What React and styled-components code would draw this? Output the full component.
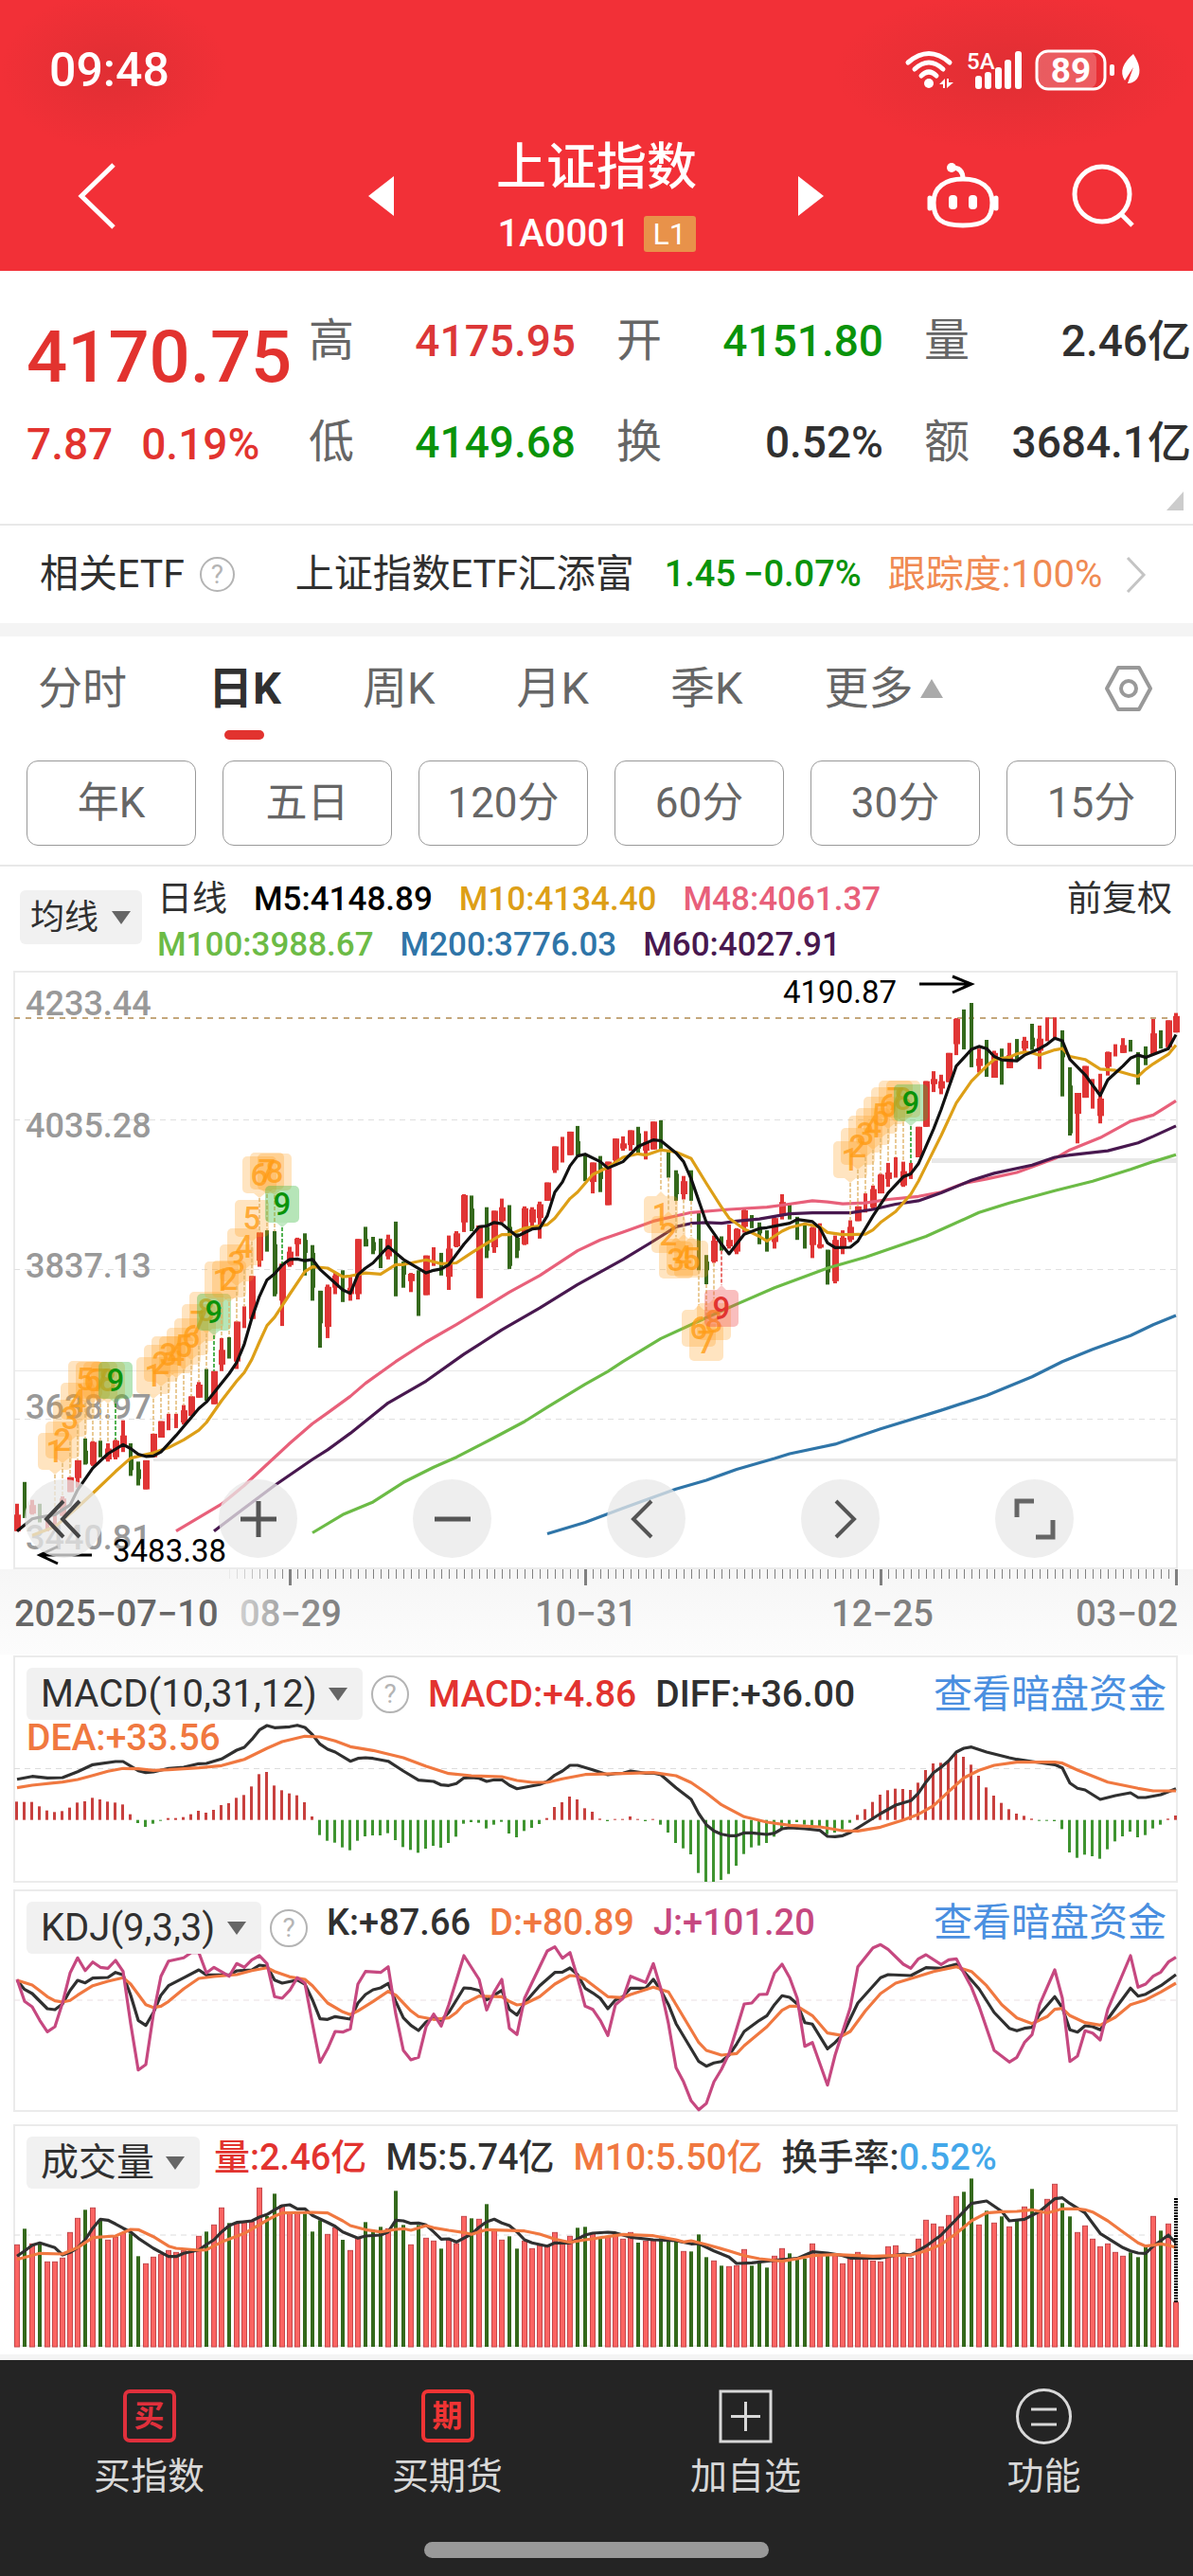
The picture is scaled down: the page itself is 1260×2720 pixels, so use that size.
import styled, { createGlobalStyle } from "styled-components";

const GlobalStyle = createGlobalStyle`
    * {
        box-sizing: border-box;
    }
    body {
        margin: 0;
        background: #fff;
        color: #303030;
        font-family: Roboto, "Noto Sans CJK SC", sans-serif;
        line-height: 1.2;
    }
    button, select {
        margin: 0;
        padding: 0;
        border: none;
        background: none;
        color: inherit;
        font: inherit;
    }
    a {
        color: inherit;
        text-decoration: none;
    }
    svg {
        display: block;
        overflow: visible;
    }
`;

const RED = "#e2332f";
const GREEN = "#0a930a";
const DARK_GREEN = "#34691c";
const ORANGE = "#f07840";
const DARK = "#303030";
const PURPLE = "#c64880";

/* ---------- chart data: every value is a height on the plot, counted from the top ---------- */

// colour, high, low, body top, body bottom
const CANDLES = `
r1237,1300,1262,1300 g1187,1270 r1228,1262,1240,1260 g1237,1280 r1265,1300 r1250,1290 r1220,1265,1225,1265 r1176,1210,1176,1210
r1137,1200,1137,1178 g1087,1147,1115,1145 r1093,1150,1095,1147 g1092,1130 r1098,1140,1110,1135 r1090,1135,1092,1130 r1045,1118,1080,1103 g1098,1173,1130,1160
g1140,1195,1158,1180 r1137,1204,1137,1204 r1076,1130,1076,1130 r1047,1085,1047,1085 r1030,1068 r1030,1063 r1010,1055,1022,1050 r990,1035,990,1035
r957,993,963,993 g927,1000 r932,1008,932,1008 r856,932,883,917 g854,903 r818,927,818,910 r783,833 r713,812,713,812
r613,692,613,678 g608,657 g610,760,640,755 r685,828,685,770 r646,692,657,688 r625,668,627,640 g615,712,630,660 g642,770,660,740
g747,878,747,822 r733,856,738,830 r705,755,712,740 g700,773 r715,770,740,755 r628,767,628,755 g600,645,628,645 g623,663,635,655
g627,695 r618,675,628,668 g588,760 g680,740,685,710 r706,750,708,725 g700,805 r666,757,666,757 r647,690
g660,712 r620,745,650,715 r610,647,615,645 r525,612,527,590 g528,610,558,605 r597,764,597,764 g555,672,600,655 r563,660,563,647
r535,590,555,587 g550,697,600,690 g615,672,625,655 r553,642,557,640 r555,600,560,590 r542,627,548,580 r498,540,498,540 r415,476,415,470
r393,452 r381,435,381,435 g368,435,403,435 g435,495 r452,523,452,497 g437,520,463,490 r450,550,450,550 r397,460,397,447
r392,425,408,420 r378,425,378,412 g370,433,385,420 r380,445,405,425 r358,422,358,422 g355,427 g427,487 g470,540,478,525
r483,537,495,525 g470,540 g565,700 g665,732,680,700 r620,683,632,680 g622,655 r595,650,630,645 r603,663,605,657
r560,613,562,600 g573,603 g590,640,600,615 g608,657 r578,650,580,635 r525,583,543,575 g545,583 g577,630
g592,650 r600,672,602,642 r592,650,640,648 g653,733,653,705 r620,730,630,725 r608,663,625,650 r585,635,600,630 r553,587,553,587
r523,567 r505,560,513,555 r478,523,480,523 r453,508,475,490 r440,487 r450,508,472,505 r453,490 r370,440,370,440
r265,370,265,370 r242,290,260,272 r250,295,265,282 r200,267,200,267 r120,205,122,180 g100,192 g85,233 r190,245,213,230
g170,255 r195,257,200,257 g190,273 r177,235,205,235 g168,215 r163,200,172,190 g133,193,165,185 r137,237,167,195
r118,173 r118,170 g148,300,180,210 g233,390,275,385 r292,408,292,340 r230,303,230,303 r260,328 r248,362,305,345
r197,252,198,232 r180,208 r166,200,182,200 g170,197 g198,273 g185,228 r122,203,155,203 g148,190
r125,187,125,187 r108,153,115,153`
  .trim()
  .split(/\s+/)
  .map((item) => {
    const [high, low, top, bottom] = item.slice(1).split(",").map(Number);
    return { up: item[0] === "r", high, low, top, bottom };
  });

// bar index : value
const AVERAGES = [
  { color: "#2f75a8", data: "70:1306 75:1280 80:1247 87:1203 91:1183 95:1158 100:1133 102:1122 108:1100 114:1065 122:1022 128:988 134:945 138:910 142:882 147:850 150:825 153:804" },
  { color: "#6cbb46", data: "39:1304 43:1262 47:1233 51:1188 55:1153 58:1130 63:1085 67:1048 70:1015 75:962 78:933 80:910 85:857 90:817 95:778 100:740 107:695 112:670 117:640 120:622 127:567 131:545 137:517 142:495 147:468 150:450 153:434" },
  { color: "#e8607a", data: "21:1300 27:1238 30:1195 36:1098 39:1053 41:1028 44:990 46:960 50:910 54:865 58:825 61:793 65:750 69:712 74:655 77:630 80:612 84:587 89:567 94:560 99:555 101:550 105:540 107:543 109:547 112:545 115:537 119:530 122:520 125:500 128:490 132:475 137:443 139:423 143:395 147:357 150:343 153:310" },
  { color: "#48184f", data: "26:1300 34:1195 39:1135 41:1113 44:1075 49:1005 54:955 59:893 64:837 69:787 74:733 80:675 84:633 87:600 89:592 91:590 93:592 95:587 98:582 102:570 105:568 110:568 113:560 116:548 119:540 122:522 126:493 129:477 134:458 137:440 139:435 144:425 148:407 150:392 153:368" },
  { color: "#dd9f17", data: "2:1310 5:1290 8:1245 10:1213 13:1163 15:1132 17:1124 18:1120 20:1108 22:1090 24:1068 25:1050 27:1000 29:955 30:935 31:905 32:865 33:827 34:808 36:755 38:703 39:692 41:695 43:715 44:713 46:706 48:709 50:687 51:687 54:676 56:685 58:683 60:660 62:638 64:618 65:618 67:603 70:595 71:580 73:535 74:520 76:480 78:463 80:440 82:432 83:435 85:423 87:428 89:443 91:500 93:555 94:580 96:605 98:622 99:633 101:610 102:602 104:593 106:600 107:613 109:618 110:618 112:617 113:607 114:590 116:565 118:525 119:495 120:460 122:390 124:315 126:265 128:230 129:215 131:210 132:202 133:198 134:200 135:205 137:193 138:190 139:208 141:215 143:237 145:240 147:250 148:254 149:238 150:225 152:203 153:182" },
  { color: "#111", data: "0:1300 2:1272 3:1268 5:1262 7:1240 8:1205 10:1155 12:1122 14:1101 15:1110 16:1123 17:1128 18:1127 19:1118 21:1080 24:1018 25:1003 28:938 29:912 30:870 31:810 32:760 33:722 34:708 35:688 36:675 37:674 38:678 39:675 40:698 43:745 44:753 45:710 46:695 47:683 49:645 51:675 54:706 55:700 56:697 57:687 59:640 61:600 62:598 63:590 64:593 66:622 68:605 69:603 70:575 71:520 72:497 73:460 74:437 75:433 77:450 78:465 80:450 82:415 84:400 85:402 87:430 88:450 89:490 90:540 91:590 93:640 94:662 96:617 98:604 99:602 101:595 102:592 103:583 105:588 106:603 107:637 108:648 110:647 111:633 113:575 115:522 117:485 118:478 119:455 121:375 122:330 123:280 124:230 126:192 127:185 128:190 129:208 130:216 132:218 133:205 135:190 136:180 137:166 138:172 139:215 141:250 143:298 144:262 146:230 147:212 148:205 149:210 152:190 153:158" },
];

// nine-turn counters: first bar index, flag tops, side of the candle
const COUNTERS = [
  { start: 5, last: "green", tops: [488, 476, 453, 435, 412, 413, 413, 413, 413] },
  { start: 18, last: "green", tops: [408, 395, 386, 386, 377, 367, 352, 339, 341] },
  { start: 27, last: "green", tops: [307, 306, 289, 272, 242, 196, 192, 193, 227] },
  { start: 85, last: "red", below: true, tops: [238, 259, 286, 283, 285, 358, 373, 351, 337] },
  { start: 110, last: "green", tops: [180, 166, 153, 145, 133, 123, 116, 116, 120] },
];
const FLAG_COLORS = {
  orange: { fill: "#ff9e1b", text: "#ff9c14" },
  green: { fill: "#35b63b", text: "#0a930a" },
  red: { fill: "#ee4a4a", text: "#e2332f" },
};

const MACD_BARS = `487 488 488 502 515 520 517 506 490 486 475 480 487 490 496 527 555 567 557 548 539 539 536 527 516 522 513 498 492 475 466 439 400 393 436 451 461 467 489 534
593 611 617 632 641 611 597 594 594 587 609 631 640 649 636 627 633 618 598 557 552 554 572 560 551 588 600 580 570 558 539 504 489 471 480 508 519 541 549 542
542 534 542 549 542 560 585 618 635 654 713 741 741 735 716 690 653 632 626 618 598 575 570 552 560 565 570 590 585 575 554 529 511 488 465 451 446 447 450 427
387 366 364 360 335 345 370 405 442 468 491 511 525 532 541 548 548 549 574 648 665 655 660 668 638 613 597 582 600 593 572 560 541 531`
  .split(/\s+/)
  .map(Number);
const MACD_LINES = [
  { color: DARK, data: "0:416 2:407 4:412 6:411 8:392 10:370 13:360 14:360 16:389 17:395 18:393 20:382 22:378 24:367 25:366 27:352 29:324 30:315 31:290 32:260 33:246 34:253 36:250 37:245 38:252 39:275 40:305 41:321 42:330 44:359 45:350 46:348 47:350 49:359 51:390 53:419 55:423 56:434 57:436 58:430 59:412 60:411 61:413 62:423 63:418 64:418 65:435 66:446 69:433 70:423 71:403 72:390 73:372 74:372 76:386 78:402 79:398 80:397 81:390 83:397 84:397 85:402 87:443 89:480 90:525 91:560 92:580 93:590 94:595 95:595 96:586 97:586 99:591 100:587 101:573 102:570 104:573 106:578 107:597 108:598 109:595 110:585 112:555 114:525 116:498 118:484 119:460 120:425 121:395 122:378 123:358 124:330 125:318 126:314 128:330 131:348 132:353 134:360 137:370 138:380 139:428 140:445 141:450 143:480 145:468 147:459 148:474 149:474 151:465 153:446" },
  { color: ORANGE, data: "0:443 2:435 6:425 8:417 10:404 12:391 14:382 16:383 18:388 20:386 22:383 24:380 27:373 30:353 33:318 35:297 38:280 40:282 42:295 44:313 47:325 51:348 54:375 57:398 60:405 64:408 66:420 68:426 70:426 72:415 75:401 80:398 84:395 87:405 89:427 91:460 93:497 96:535 99:552 102:562 106:567 109:579 111:580 114:568 117:545 119:527 121:500 123:455 125:412 127:388 129:372 132:362 137:362 138:365 140:387 144:425 148:445 150:453 153:453" },
];

const KDJ_LINES = [
  { color: DARK, data: "0:1053 1:1082 2:1095 4:1143 5:1146 6:1128 7:1085 8:1053 9:1061 10:1046 12:1044 13:1028 14:1036 15:1100 16:1180 17:1196 18:1155 19:1100 20:1070 22:1045 24:1020 25:1036 28:1036 29:1023 31:1020 32:1005 33:1008 34:1052 35:1062 37:1052 38:1065 39:1115 40:1175 41:1177 42:1168 44:1176 45:1125 46:1098 47:1083 48:1077 49:1063 50:1120 51:1172 52:1196 53:1212 54:1185 55:1170 56:1180 57:1155 59:1077 60:1079 61:1085 62:1115 64:1085 65:1145 66:1163 67:1125 69:1070 71:1028 72:1027 73:1014 74:1035 75:1078 76:1093 77:1110 78:1143 79:1115 80:1105 81:1078 83:1078 84:1050 85:1085 86:1130 87:1190 90:1310 91:1325 92:1315 93:1310 94:1290 95:1255 96:1215 98:1180 99:1165 100:1130 101:1102 102:1107 103:1128 104:1187 105:1192 107:1270 108:1250 109:1225 111:1125 114:1045 115:1035 118:1038 120:1013 122:1015 124:1002 125:1025 127:1080 129:1155 131:1205 132:1213 133:1205 134:1202 135:1160 137:1105 138:1140 139:1210 140:1217 141:1197 142:1200 143:1210 144:1175 147:1078 148:1103 149:1097 151:1070 153:1035" },
  { color: ORANGE, data: "0:1053 2:1068 3:1086 4:1105 5:1118 6:1122 7:1117 8:1100 10:1070 12:1056 14:1045 15:1065 17:1130 18:1139 19:1135 20:1120 22:1080 24:1047 26:1041 29:1035 31:1022 33:1013 34:1025 36:1042 38:1050 39:1070 41:1125 43:1153 44:1162 45:1150 47:1120 49:1088 50:1100 52:1150 53:1168 55:1177 57:1172 58:1155 59:1128 61:1103 64:1105 65:1120 66:1131 67:1128 69:1105 71:1065 73:1038 74:1040 75:1050 78:1105 80:1108 81:1098 84:1075 86:1090 88:1170 90:1250 91:1275 93:1290 95:1285 96:1260 99:1200 101:1148 102:1135 103:1135 105:1165 107:1220 109:1228 110:1215 112:1150 114:1095 116:1062 119:1040 121:1025 124:1010 126:1025 128:1070 130:1130 132:1172 134:1190 136:1168 137:1145 138:1142 139:1165 141:1187 143:1195 145:1170 147:1130 149:1115 151:1090 153:1062" },
  { color: PURPLE, data: "0:1050 1:1120 2:1137 3:1180 4:1216 5:1200 6:1125 7:1030 8:982 9:1022 10:995 11:1012 12:1015 13:990 14:1025 15:1190 16:1337 17:1320 18:1160 19:1040 20:992 22:982 23:965 24:965 25:1030 26:1012 28:1040 29:1000 30:1012 31:988 32:975 33:1000 34:1105 35:1110 36:1085 37:1045 38:1062 39:1190 40:1313 41:1270 42:1215 43:1217 44:1207 45:1065 46:1025 48:1028 49:1010 50:1160 51:1275 52:1305 53:1297 54:1200 55:1160 56:1198 57:1130 59:975 61:1050 62:1147 63:1090 64:1050 65:1205 66:1225 67:1110 68:1060 70:960 71:947 72:983 73:965 74:1045 75:1135 76:1145 77:1180 78:1228 79:1130 80:1110 81:1040 83:1060 84:1000 85:1080 86:1190 87:1330 88:1375 89:1435 90:1463 91:1443 92:1375 93:1335 94:1285 96:1128 97:1125 98:1098 99:1097 100:1030 101:1002 102:1045 103:1110 104:1262 105:1250 107:1385 108:1290 110:1140 111:1010 112:980 113:950 114:940 115:955 117:1002 118:1015 119:985 120:972 122:1003 123:988 124:985 126:1075 127:1135 129:1275 131:1312 132:1297 133:1250 134:1225 135:1130 137:1020 138:1110 139:1310 140:1293 141:1213 142:1220 143:1242 144:1145 147:975 148:1075 149:1065 150:1040 151:1027 152:995 153:980" },
];

const VOLUMES = `421 370 418 420 475 475 463 382 337 310 304 345 406 397 385 385 457 481 460 452 439 445 440 440 394 379 358 304 352 355 350 348 241 330 259 296 322 322 322 379
343 388 367 405 439 400 349 373 364 370 250 358 421 358 400 409 433 405 417 331 337 340 292 376 406 394 433 409 433 424 424 382 412 394 367 364 385 400 395 388
403 382 414 409 408 400 405 408 442 442 388 460 472 487 490 487 436 487 475 493 457 433 448 465 465 418 455 452 455 481 460 445 455 472 475 427 424 455 463 403
343 355 364 328 268 253 211 358 313 352 331 364 345 301 244 316 277 229 289 331 382 361 403 427 418 445 457 445 460 421 331 376 355 603`
  .split(/\s+/)
  .map(Number);
const VOLUME_LINES = [
  { color: DARK, data: "0:457 1:440 2:422 3:415 5:430 6:453 7:445 8:430 9:405 10:368 11:340 12:343 13:355 14:368 15:380 16:400 18:432 20:458 21:458 22:448 24:437 25:420 26:405 27:380 28:360 29:350 31:345 32:333 33:325 34:310 35:297 36:294 37:307 38:307 39:328 41:350 42:362 43:380 45:400 46:393 48:390 49:380 50:343 51:345 52:353 53:352 54:358 55:380 56:403 57:402 58:412 60:387 61:365 62:348 63:340 64:352 65:360 66:380 67:405 68:415 70:425 71:415 73:415 75:390 76:384 78:381 79:383 81:397 84:405 87:408 89:418 90:417 92:440 94:460 95:480 97:478 100:470 103:464 105:443 107:447 109:455 110:463 114:463 117:450 118:453 120:425 122:390 124:340 126:290 128:282 130:315 131:345 133:340 135:315 137:275 138:272 139:290 141:320 143:385 145:415 146:430 147:440 148:447 149:448 150:425 152:390 153:415" },
  { color: ORANGE, data: "0:467 3:448 6:450 8:430 10:398 13:393 15:372 16:373 18:395 20:425 21:432 24:438 25:437 27:412 30:385 32:357 33:343 34:330 35:320 39:318 41:320 43:345 44:360 46:373 48:380 50:372 51:370 52:375 54:360 55:367 57:375 59:382 60:388 62:373 67:377 69:387 71:403 73:413 75:405 78:395 80:388 84:392 87:405 88:412 89:408 91:420 94:440 96:455 98:465 101:473 103:465 105:455 108:452 111:455 113:457 116:455 118:453 120:440 122:420 124:385 126:345 128:320 130:316 132:315 134:310 136:320 138:307 140:307 141:310 142:317 144:345 146:380 148:415 149:425 150:422 151:418 152:422 153:430" },
];

const X_LABELS = [
  { x: 1, text: "2025−07−10", fill: "#666", anchor: "start" },
  { x: 293, text: "08−29", fill: "url(#fade)", anchor: "middle" },
  { x: 605, text: "10−31", fill: "#808080", anchor: "middle" },
  { x: 918, text: "12−25", fill: "#808080", anchor: "middle" },
  { x: 1230, text: "03−02", fill: "#808080", anchor: "end" },
];
const Y_LABELS = [
  { y: 47, text: "4233.44" },
  { y: 176, text: "4035.28" },
  { y: 324, text: "3837.13" },
  { y: 473, text: "3638.97" },
  { y: 611, text: "3440.81" },
];

const barX = (i) => 4 + 8 * i;
const priceY = (v) => Math.round(v * 4.59) / 10 - 5;

const Line = ({ data, color, y }) => (
  <polyline
    points={data
      .split(" ")
      .map((p) => {
        const [i, v] = p.split(":").map(Number);
        return `${barX(i)},${y(v).toFixed(1)}`;
      })
      .join(" ")}
    fill="none"
    stroke={color}
    strokeWidth="3.2"
    strokeLinejoin="round"
  />
);

/* ---------- header ---------- */

const Header = styled.header`
    color: #fff;
    background:
        radial-gradient(closest-side, rgba(205, 45, 48, 0.5), transparent) 0 -10px / 240px 170px no-repeat,
        radial-gradient(closest-side, rgba(205, 45, 48, 0.5), transparent) right -10px / 380px 170px no-repeat,
        #f23037;
`;
const StatusBar = styled.div`
    display: flex;
    align-items: center;
    justify-content: space-between;
    height: 148px;
    padding: 0 55px 0 52px;
`;
const Clock = styled.time`
    font-size: 50px;
    font-weight: 500;
`;
const StatusIcons = styled.div`
    display: flex;
    align-items: center;
    gap: 14px;
`;
const NavBar = styled.nav`
    display: grid;
    grid-template-columns: 1fr auto 1fr;
    grid-template-rows: 100%;
    align-items: center;
    height: 138px;
    padding-bottom: 20px;
`;
const NavSide = styled.div`
    display: flex;
    align-items: center;
    justify-content: space-between;
    padding: 0 ${(props) => (props.$end ? "62px" : "108px")} 0 ${(props) => (props.$end ? "107px" : "81px")};
`;
const NavTools = styled.div`
    display: flex;
    align-items: center;
    gap: 76px;
`;
const IconButton = styled.button`
    display: block;
    cursor: pointer;
`;
const TitleBlock = styled.div`
    text-align: center;
`;
const Title = styled.h1`
    margin: 0;
    font-size: 53px;
    font-weight: 500;
    line-height: 80px;
`;
const Code = styled.div`
    display: flex;
    align-items: center;
    justify-content: center;
    gap: 14px;
    font-size: 40px;
    font-weight: 500;
    line-height: 60px;
`;
const LevelBadge = styled.span`
    width: 55px;
    border-radius: 3px;
    background: #e8924a;
    font-size: 32px;
    font-weight: 400;
    line-height: 38px;
`;

/* ---------- quote ---------- */

const Quote = styled.section`
    display: flex;
    position: relative;
    height: 269px;
    padding: 20px 2px 0 28px;
    border-bottom: 2px solid #e8e8e8;
`;
const PriceBlock = styled.div`
    flex: none;
    width: 298px;
    color: #e2332f;
`;
const Price = styled.div`
    font-size: 76px;
    font-weight: 500;
    line-height: 142px;
    white-space: nowrap;
`;
const Change = styled.div`
    display: flex;
    gap: 30px;
    font-size: 46px;
    font-weight: 500;
    line-height: 42px;
`;
const Stats = styled.dl`
    flex: 1;
    display: grid;
    grid-template-columns: repeat(3, 1fr);
    grid-auto-rows: 107px;
    align-items: center;
    column-gap: 43px;
    margin: 0;
`;
const Stat = styled.div`
    display: flex;
    align-items: baseline;
    justify-content: space-between;
    font-size: 46px;
    white-space: nowrap;
`;
const StatName = styled.dt`
    color: #666;
    font-size: 48px;
`;
const StatValue = styled.dd`
    margin: 0;
    color: ${(props) => props.$color || DARK};
    font-weight: 500;
`;
const Corner = styled.span`
    position: absolute;
    right: 10px;
    bottom: 14px;
    border-left: 18px solid transparent;
    border-bottom: 20px solid #ccc;
`;

const EtfRow = styled.a`
    display: flex;
    align-items: center;
    height: 117px;
    padding: 0 49px 0 42px;
    border-bottom: 14px solid #f4f4f4;
    font-size: 41px;
    white-space: nowrap;
`;
const EtfName = styled.span`
    margin: 0 32px 0 64px;
`;
const EtfNumber = styled.span`
    margin-right: ${(props) => props.$gap || 0}px;
    color: ${(props) => props.$color};
    font-size: ${(props) => props.$size}px;
    font-weight: ${(props) => (props.$bold ? 500 : 400)};
`;
const Help = styled.span`
    flex: none;
    width: ${(props) => props.$size}px;
    height: ${(props) => props.$size}px;
    margin-left: ${(props) => props.$gap}px;
    border: 2px solid #b4b4b4;
    border-radius: 50%;
    color: #b4b4b4;
    font-size: 28px;
    line-height: ${(props) => props.$size - 4}px;
    text-align: center;
`;
const PushRight = styled.span`
    margin-left: auto;
`;

/* ---------- periods ---------- */

const Tabs = styled.div`
    display: flex;
    align-items: center;
    gap: 86px;
    height: 110px;
    padding: 0 42px 0 40px;
`;
const Tab = styled.button`
    display: flex;
    align-items: center;
    gap: 8px;
    position: relative;
    color: ${(props) => (props.$active ? "#303030" : "#666")};
    font-size: 47px;
    font-weight: ${(props) => (props.$active ? 700 : 400)};
    white-space: nowrap;

    &::after {
        content: "";
        display: ${(props) => (props.$active ? "block" : "none")};
        position: absolute;
        left: 50%;
        bottom: -26px;
        width: 42px;
        height: 10px;
        margin-left: -21px;
        border-radius: 5px;
        background: #e2332f;
    }
`;
const Triangle = styled.span`
    border: ${(props) => props.$size}px solid transparent;
    border-top: ${(props) => (props.$up ? "0" : "14px solid #666")};
    border-bottom: ${(props) => (props.$up ? "20px solid #aaa" : "0")};
`;
const SubPeriods = styled.div`
    display: grid;
    grid-template-columns: repeat(6, 1fr);
    gap: 28px;
    padding: 21px 18px 20px 28px;
    border-bottom: 2px solid #e8e8e8;
`;
const PeriodButton = styled.button`
    height: 90px;
    border: 1px solid #999;
    border-radius: 12px;
    color: #666;
    font-size: 44px;
`;

/* ---------- charts ---------- */

const Legend = styled.div`
    display: flex;
    align-items: flex-start;
    height: 110px;
    padding: 11px 22px 0 21px;
    font-size: 35px;
    line-height: 48px;
    white-space: nowrap;
`;
const LegendRows = styled.div`
    flex: 1;
    margin-left: 16px;
    font-weight: 500;
`;
const LegendRow = styled.div`
    display: flex;
    gap: 28px;
`;
const LegendTitle = styled.span`
    font-size: 37px;
    font-weight: 400;
`;
const Colored = styled.span`
    color: ${(props) => props.$color || DARK};
`;
const SelectBox = styled.span`
    flex: none;
    display: inline-flex;
    align-items: center;
    position: relative;
    height: ${(props) => (props.$small ? 57 : 55)}px;
    margin-top: ${(props) => (props.$small ? 14 : 0)}px;
    border-radius: 6px;
    background: #f1f1f1;
    color: #303030;

    select {
        height: 100%;
        padding: 0 ${(props) => (props.$small ? "45px 0 11px" : "48px 0 15px")};
        appearance: none;
        font-size: ${(props) => (props.$small ? 36 : 40)}px;
    }
    ${Triangle} {
        position: absolute;
        right: ${(props) => (props.$small ? 12 : 16)}px;
        pointer-events: none;
    }
`;
const Charts = styled.main`
    padding: 0 16px 8px 14px;
    border-bottom: 6px solid #f4f4f4;
`;
const PlotArea = styled.div`
    position: relative;
    margin-bottom: ${(props) => props.$gap || 0}px;
`;
const Plot = styled.svg`
    width: 100%;
    height: auto;
`;
const ZoomBar = styled.div`
    display: flex;
    justify-content: space-between;
    position: absolute;
    top: 537px;
    left: 12px;
    right: 110px;
`;
const RoundButton = styled.button`
    display: flex;
    align-items: center;
    justify-content: center;
    width: 83px;
    height: 83px;
    border-radius: 50%;
    background: rgba(232, 232, 232, 0.75);
`;
const PanelHead = styled.div`
    display: flex;
    align-items: ${(props) => (props.$center ? "center" : "flex-start")};
    position: absolute;
    top: 13px;
    left: 14px;
    right: 12px;
    line-height: 44px;
    white-space: nowrap;
`;
const Indicator = styled.div`
    display: flex;
    align-items: center;
`;
const Values = styled.div`
    display: flex;
    gap: 20px;
    margin-left: ${(props) => props.$gap}px;
    font-size: ${(props) => props.$size}px;
    font-weight: 500;
`;
const DarkPoolLink = styled.a`
    margin-left: auto;
    color: #4a8fe0;
    font-size: 41px;
`;
const SecondRow = styled.div`
    position: absolute;
    top: 65px;
    left: 14px;
    color: #f07840;
    font-size: 39px;
    font-weight: 500;
    line-height: 44px;
`;

/* ---------- bottom bar ---------- */

const BottomBar = styled.footer`
    padding-bottom: 19px;
    background: #242424;
    color: #d8d8d8;
`;
const Actions = styled.div`
    display: grid;
    grid-template-columns: repeat(4, 1fr);
    height: 192px;
    padding-top: 30px;
`;
const Action = styled.button`
    display: flex;
    flex-direction: column;
    align-items: center;
    gap: 6px;
    font-size: 39px;
    line-height: 56px;
`;
const WordIcon = styled.span`
    width: 56px;
    height: 56px;
    margin: 1px 0 2px;
    border: 4px solid ${(props) => props.$color};
    border-radius: 7px;
    color: ${(props) => props.$color};
    font-size: 32px;
    font-weight: 700;
    line-height: 48px;
`;
const HomeIndicator = styled.div`
    width: 364px;
    height: 17px;
    margin: 0 auto;
    border-radius: 9px;
    background: #999;
`;

const STATS = [
  { name: "高", value: "4175.95", color: "#dc3737" },
  { name: "开", value: "4151.80", color: GREEN },
  { name: "量", value: "2.46亿" },
  { name: "低", value: "4149.68", color: GREEN },
  { name: "换", value: "0.52%" },
  { name: "额", value: "3684.1亿" },
];

const Dropdown = ({ text, label, small }) => (
  <SelectBox $small={small}>
    <select aria-label={label}>
      <option>{text}</option>
    </select>
    <Triangle $size={10} />
  </SelectBox>
);

const StatusBarIcons = () => (
  <StatusIcons>
    <svg width="51" height="42" viewBox="0 0 51 42" fill="none" stroke="#fff" strokeWidth="5" strokeLinecap="round">
      <path d="M3 13Q25-6 47 13M10 20Q25 6 40 20M17 27Q25 19 33 27" />
      <circle cx="25" cy="35" r="5" fill="#fff" stroke="none" />
      <path d="M42 30v10h-2v-4h-4zM44 40V30h2v4h5z" fill="#fff" stroke="none" />
    </svg>
    <svg width="58" height="42" viewBox="0 0 58 42" fill="#fff">
      <text x="0" y="20" fontSize="24" fontWeight="500">5A</text>
      <rect x="9" y="27" width="7" height="14" rx="3" />
      <rect x="19" y="23" width="7" height="18" rx="3" />
      <rect x="30" y="18" width="7" height="23" rx="3" />
      <rect x="40" y="10" width="7" height="31" rx="3" />
      <rect x="51" y="1" width="7" height="40" rx="3" />
    </svg>
    <svg width="112" height="44" viewBox="0 0 112 44">
      <rect x="3" y="3" width="62" height="38" rx="8" fill="#fff" fillOpacity="0.22" />
      <rect x="2" y="2" width="72" height="40" rx="12" fill="none" stroke="#fff" strokeWidth="3" />
      <rect x="79" y="16" width="5" height="12" rx="2" fill="#fff" />
      <text x="38" y="35" fontSize="37" fontWeight="700" fill="#fff" textAnchor="middle">89</text>
      <path d="M104 5C110 14 113 24 108 31C105 35 101 36 98 36L104 19L95 33C89 24 93 14 104 5Z" fill="#fff" />
    </svg>
  </StatusIcons>
);

const PriceChart = () => (
  <Plot viewBox="0 0 1230 723">
    <defs>
      <linearGradient id="fade">
        <stop offset="0" stopColor="#d0d0d0" />
        <stop offset="0.6" stopColor="#909090" />
        <stop offset="1" stopColor="#808080" />
      </linearGradient>
      <linearGradient id="axis" x1="0" y1="0" x2="0" y2="1">
        <stop offset="0" stopColor="#f6f6f6" />
        <stop offset="1" stopColor="#fcfcfc" />
      </linearGradient>
    </defs>
    <rect x="-14" y="632" width="1260" height="90" fill="url(#axis)" />
    <rect x="1" y="1" width="1228" height="630" fill="#fff" stroke="#ebebeb" strokeWidth="2" />
    <g stroke="#e0e0e0" strokeDasharray="6 5">
      <path d="M1 157.5H1229M1 315.5H1229M1 473.5H1229" />
    </g>
    <path d="M1 422.5H1229" stroke="#e8e8e8" />
    <path d="M148 516.5H1229" stroke="#e8e8e8" strokeWidth="3" />
    <path d="M970 200.5H1229" stroke="#e8e8e8" strokeWidth="5" />
    <path d="M1 50H1229" stroke="#c4a77c" strokeWidth="2" strokeDasharray="6 6" />

    <g fill="#999" fontSize="36" fontWeight="500">
      {Y_LABELS.map((label) => (
        <text key={label.text} x="13" y={label.y}>{label.text}</text>
      ))}
    </g>

    {CANDLES.map((c, i) => (
      <g key={i} fill={c.up ? "#e03535" : DARK_GREEN}>
        <rect x={barX(i) - 2} y={priceY(c.high)} width="4" height={priceY(c.low) - priceY(c.high)} />
        {c.top && (
          <rect x={barX(i) - (c.up ? 3 : 2)} y={priceY(c.top)} width={c.up ? 7 : 5} height={priceY(c.bottom) - priceY(c.top)} />
        )}
      </g>
    ))}
    {AVERAGES.map((line) => (
      <Line key={line.color} {...line} y={priceY} />
    ))}

    {COUNTERS.map((group) =>
      group.tops.map((top, n) => {
        const x = barX(group.start + n);
        const candle = CANDLES[group.start + n];
        const isLast = n === 8;
        const colors = FLAG_COLORS[isLast ? group.last : "orange"];
        const tip = group.below ? `M${x - 5} ${top}l5 -5l5 5` : `M${x - 6} ${top + 39}l6 5l6 -5`;
        const from = group.below ? priceY(candle.low) : top + 44;
        const to = group.below ? top - 5 : priceY(candle.high);
        return (
          <g key={`${group.start}-${n}`}>
            <path d={`M${x} ${from}V${to}`} stroke={isLast ? colors.text : "#e0b46a"} strokeWidth="1.4" strokeDasharray="4 2" />
            <rect x={x - 18} y={top} width="36" height="39" rx="5" fill={colors.fill} fillOpacity={isLast ? 0.36 : 0.28} />
            <path d={tip} fill={colors.fill} fillOpacity="0.3" />
            <text x={x} y={top + 31} fontSize="33" fontWeight="500" textAnchor="middle" fill={colors.text} fillOpacity={isLast ? 1 : 0.8}>
              {n + 1}
            </text>
          </g>
        );
      })
    )}

    <g fill="none" stroke="#000" strokeWidth="3">
      <path d="M957 14h54M992 6l20 8l-20 9" />
      <path d="M83 617H30M47 608l-19 9l19 9" />
    </g>
    <g fontSize="33" fill="#000">
      <text x="813" y="34">4190.87</text>
      <text x="105" y="624">3483.38</text>
    </g>

    {CANDLES.map((c, i) => {
      const major = [36, 75, 114, 153].includes(i);
      if (i < 28) return null;
      return (
        <rect
          key={i}
          x={barX(i) - (major ? 1 : 0)}
          y="632"
          width={major ? 3 : 1}
          height={major ? 17 : 10}
          fill="#808080"
          fillOpacity={i < 36 ? (i - 27) / 9 : 1}
        />
      );
    })}
    <g fontSize="38" fontWeight="500">
      {X_LABELS.map((label) => (
        <text key={label.text} x={label.x} y="692" fill={label.fill} textAnchor={label.anchor}>{label.text}</text>
      ))}
    </g>
  </Plot>
);

const macdY = (v) => v / 3 - 8;
const kdjY = (v) => v / 3 - 255;
const volumeY = (v) => v / 3 - 13;

const MacdChart = () => (
  <Plot viewBox="0 0 1230 240">
    <rect x="1" y="1" width="1228" height="238" fill="#fff" stroke="#ebebeb" strokeWidth="2" />
    <path d="M1 119.5H1229" stroke="#dcdcdc" strokeDasharray="6 5" />
    {MACD_BARS.map((v, i) => (
      <rect
        key={i}
        x={barX(i) - 2}
        y={macdY(Math.min(v, 545))}
        width="3"
        height={Math.abs(v - 545) / 3}
        fill={v < 545 ? "#c8403e" : "#3e9430"}
      />
    ))}
    {MACD_LINES.map((line) => (
      <Line key={line.color} {...line} y={macdY} />
    ))}
  </Plot>
);

const KdjChart = () => (
  <Plot viewBox="0 0 1230 235">
    <rect x="1" y="1" width="1228" height="233" fill="#fff" stroke="#ebebeb" strokeWidth="2" />
    <path d="M1 117H1229" stroke="#eadfe3" strokeDasharray="6 5" />
    {KDJ_LINES.map((line) => (
      <Line key={line.color} {...line} y={kdjY} />
    ))}
  </Plot>
);

const VolumeChart = () => (
  <Plot viewBox="0 0 1230 235">
    <rect x="1" y="1" width="1228" height="233" fill="#fff" stroke="#ebebeb" strokeWidth="2" />
    <path d="M1 117H1229" stroke="#dcdcdc" strokeDasharray="6 5" />
    {VOLUMES.map((v, i) =>
      CANDLES[i].up ? (
        <rect key={i} x={barX(i) - 2.5} y={volumeY(v)} width="5" height={235 - volumeY(v)} fill="#fb6462" stroke="#c5484c" />
      ) : (
        <rect key={i} x={barX(i) - 2} y={volumeY(v)} width="4" height={235 - volumeY(v)} fill={DARK_GREEN} />
      )
    )}
    {VOLUME_LINES.map((line) => (
      <Line key={line.color} {...line} y={volumeY} />
    ))}
    <path d="M1228 78V188" stroke="#000" strokeWidth="4" strokeDasharray="2 1" />
  </Plot>
);

const App = () => {
  return (
    <>
      <GlobalStyle />
      <Header>
        <StatusBar>
          <Clock>09:48</Clock>
          <StatusBarIcons />
        </StatusBar>
        <NavBar>
          <NavSide>
            <IconButton aria-label="返回">
              <svg width="42" height="72" viewBox="0 0 42 72" fill="none" stroke="#fff" strokeWidth="5">
                <path d="M39 3L5 36L39 69" />
              </svg>
            </IconButton>
            <IconButton aria-label="上一只">
              <svg width="27" height="42" viewBox="0 0 27 42" fill="#fff"><path d="M27 0V42L0 21z" /></svg>
            </IconButton>
          </NavSide>
          <TitleBlock>
            <Title>上证指数</Title>
            <Code>
              1A0001 <LevelBadge>L1</LevelBadge>
            </Code>
          </TitleBlock>
          <NavSide $end>
            <IconButton aria-label="下一只">
              <svg width="27" height="42" viewBox="0 0 27 42" fill="#fff"><path d="M0 0V42L27 21z" /></svg>
            </IconButton>
            <NavTools>
              <IconButton aria-label="智能助手">
                <svg width="78" height="72" viewBox="0 0 78 72" fill="none" stroke="#fff" strokeWidth="5">
                  <path d="M39 18C58 18 70 27 70 43C70 60 62 67 39 67C16 67 8 60 8 43C8 27 20 18 39 18Z" />
                  <path d="M28 6C35 6 39 10 39 18" />
                  <path d="M4 38v11M74 38v11" strokeLinecap="round" />
                  <circle cx="27" cy="6" r="5" fill="#fff" stroke="none" />
                  <rect x="24" y="35" width="9" height="15" rx="4" fill="#fff" stroke="none" />
                  <rect x="45" y="35" width="9" height="15" rx="4" fill="#fff" stroke="none" />
                </svg>
              </IconButton>
              <IconButton aria-label="搜索">
                <svg width="66" height="68" viewBox="0 0 66 68" fill="none" stroke="#fff" strokeWidth="5">
                  <circle cx="32" cy="32" r="29" />
                  <path d="M52 53L64 65" />
                </svg>
              </IconButton>
            </NavTools>
          </NavSide>
        </NavBar>
      </Header>

      <Quote>
        <PriceBlock>
          <Price>4170.75</Price>
          <Change>
            <span>7.87</span>
            <span>0.19%</span>
          </Change>
        </PriceBlock>
        <Stats>
          {STATS.map((stat) => (
            <Stat key={stat.name}>
              <StatName>{stat.name}</StatName>
              <StatValue $color={stat.color}>{stat.value}</StatValue>
            </Stat>
          ))}
        </Stats>
        <Corner />
      </Quote>

      <EtfRow href="#etf">
        相关ETF
        <Help $size={37} $gap={16}>?</Help>
        <EtfName>上证指数ETF汇添富</EtfName>
        <EtfNumber $color={GREEN} $size={38} $gap={8} $bold>1.45</EtfNumber>
        <EtfNumber $color={GREEN} $size={38} $gap={28} $bold>−0.07%</EtfNumber>
        <EtfNumber $color="#f08a52" $size={40}>跟踪度:100%</EtfNumber>
        <PushRight>
          <svg width="22" height="40" viewBox="0 0 22 40" fill="none" stroke="#c4c4c4" strokeWidth="3">
            <path d="M2 2L19 20L2 38" />
          </svg>
        </PushRight>
      </EtfRow>

      <Tabs>
        <Tab>分时</Tab>
        <Tab $active>日K</Tab>
        <Tab>周K</Tab>
        <Tab>月K</Tab>
        <Tab>季K</Tab>
        <Tab>更多<Triangle $up $size={12} /></Tab>
        <PushRight>
          <IconButton aria-label="设置">
            <svg width="52" height="50" viewBox="0 0 52 50" fill="none" stroke="#999" strokeWidth="4" strokeLinejoin="round">
              <path d="M15 3H37L49 25L37 47H15L3 25Z" />
              <circle cx="26" cy="25" r="8" />
            </svg>
          </IconButton>
        </PushRight>
      </Tabs>
      <SubPeriods>
        {["年K", "五日", "120分", "60分", "30分", "15分"].map((name) => (
          <PeriodButton key={name}>{name}</PeriodButton>
        ))}
      </SubPeriods>

      <Legend>
        <Dropdown small text="均线" label="主图指标" />
        <LegendRows>
          <LegendRow>
            <LegendTitle>日线</LegendTitle>
            <Colored $color="#000">M5:4148.89</Colored>
            <Colored $color="#dd9f17">M10:4134.40</Colored>
            <Colored $color="#e8607a">M48:4061.37</Colored>
          </LegendRow>
          <LegendRow>
            <Colored $color="#6cbb46">M100:3988.67</Colored>
            <Colored $color="#2f75a8">M200:3776.03</Colored>
            <Colored $color="#48184f">M60:4027.91</Colored>
          </LegendRow>
        </LegendRows>
        <LegendTitle>前复权</LegendTitle>
      </Legend>

      <Charts>
        <PlotArea>
          <PriceChart />
          <ZoomBar>
            <RoundButton aria-label="最早">
              <svg width="44" height="44" viewBox="0 0 44 44" fill="none" stroke="#444" strokeWidth="4">
                <path d="M21 3L3 22L21 41M38 3L20 22L38 41" />
              </svg>
            </RoundButton>
            <RoundButton aria-label="放大">
              <svg width="40" height="40" viewBox="0 0 40 40" stroke="#555" strokeWidth="5"><path d="M1 20H39M20 1V39" /></svg>
            </RoundButton>
            <RoundButton aria-label="缩小">
              <svg width="40" height="40" viewBox="0 0 40 40" stroke="#555" strokeWidth="5"><path d="M1 20H39" /></svg>
            </RoundButton>
            <RoundButton aria-label="左移">
              <svg width="34" height="42" viewBox="0 0 34 42" fill="none" stroke="#555" strokeWidth="4"><path d="M22 2L3 21L22 40" /></svg>
            </RoundButton>
            <RoundButton aria-label="右移">
              <svg width="34" height="42" viewBox="0 0 34 42" fill="none" stroke="#555" strokeWidth="4"><path d="M12 2L31 21L12 40" /></svg>
            </RoundButton>
            <RoundButton aria-label="全屏">
              <svg width="44" height="44" viewBox="0 0 44 44" fill="none" stroke="#666" strokeWidth="5">
                <path d="M3 20V3H21M41 23V41H23" />
              </svg>
            </RoundButton>
          </ZoomBar>
        </PlotArea>

        <PlotArea $gap={7}>
          <MacdChart />
          <PanelHead $center>
            <Indicator>
              <Dropdown text="MACD(10,31,12)" label="副图一指标" />
              <Help $size={40} $gap={9}>?</Help>
            </Indicator>
            <Values $gap={20} $size={39}>
              <Colored $color={RED}>MACD:+4.86</Colored>
              <Colored>DIFF:+36.00</Colored>
            </Values>
            <DarkPoolLink href="#macd-funds">查看暗盘资金</DarkPoolLink>
          </PanelHead>
          <SecondRow>DEA:+33.56</SecondRow>
        </PlotArea>

        <PlotArea $gap={13}>
          <KdjChart />
          <PanelHead>
            <Indicator>
              <Dropdown text="KDJ(9,3,3)" label="副图二指标" />
              <Help $size={40} $gap={9}>?</Help>
            </Indicator>
            <Values $gap={20} $size={38}>
              <Colored>K:+87.66</Colored>
              <Colored $color={ORANGE}>D:+80.89</Colored>
              <Colored $color={PURPLE}>J:+101.20</Colored>
            </Values>
            <DarkPoolLink href="#kdj-funds">查看暗盘资金</DarkPoolLink>
          </PanelHead>
        </PlotArea>

        <PlotArea>
          <VolumeChart />
          <PanelHead>
            <Indicator>
              <Dropdown text="成交量" label="副图三指标" />
            </Indicator>
            <Values $gap={15} $size={38}>
              <Colored $color={RED}>量:2.46亿</Colored>
              <Colored>M5:5.74亿</Colored>
              <Colored $color={ORANGE}>M10:5.50亿</Colored>
              <Colored>换手率:<Colored $color="#44a8ea">0.52%</Colored></Colored>
            </Values>
          </PanelHead>
        </PlotArea>
      </Charts>

      <BottomBar>
        <Actions>
          <Action>
            <WordIcon $color="#e0303c">买</WordIcon>
            买指数
          </Action>
          <Action>
            <WordIcon $color="#f03434">期</WordIcon>
            买期货
          </Action>
          <Action>
            <svg width="59" height="59" viewBox="0 0 59 59" fill="none" stroke="#d8d8d8" strokeWidth="3">
              <path d="M3 3H56V56H3ZM14 29.500H45M29.500 14V45" />
            </svg>
            加自选
          </Action>
          <Action>
            <svg width="59" height="59" viewBox="0 0 59 59" fill="none" stroke="#d8d8d8" strokeWidth="3">
              <circle cx="29.500" cy="29.500" r="28" />
              <path d="M16 22H43M16 38H43" />
            </svg>
            功能
          </Action>
        </Actions>
        <HomeIndicator />
      </BottomBar>
    </>
  );
};

export default App;
